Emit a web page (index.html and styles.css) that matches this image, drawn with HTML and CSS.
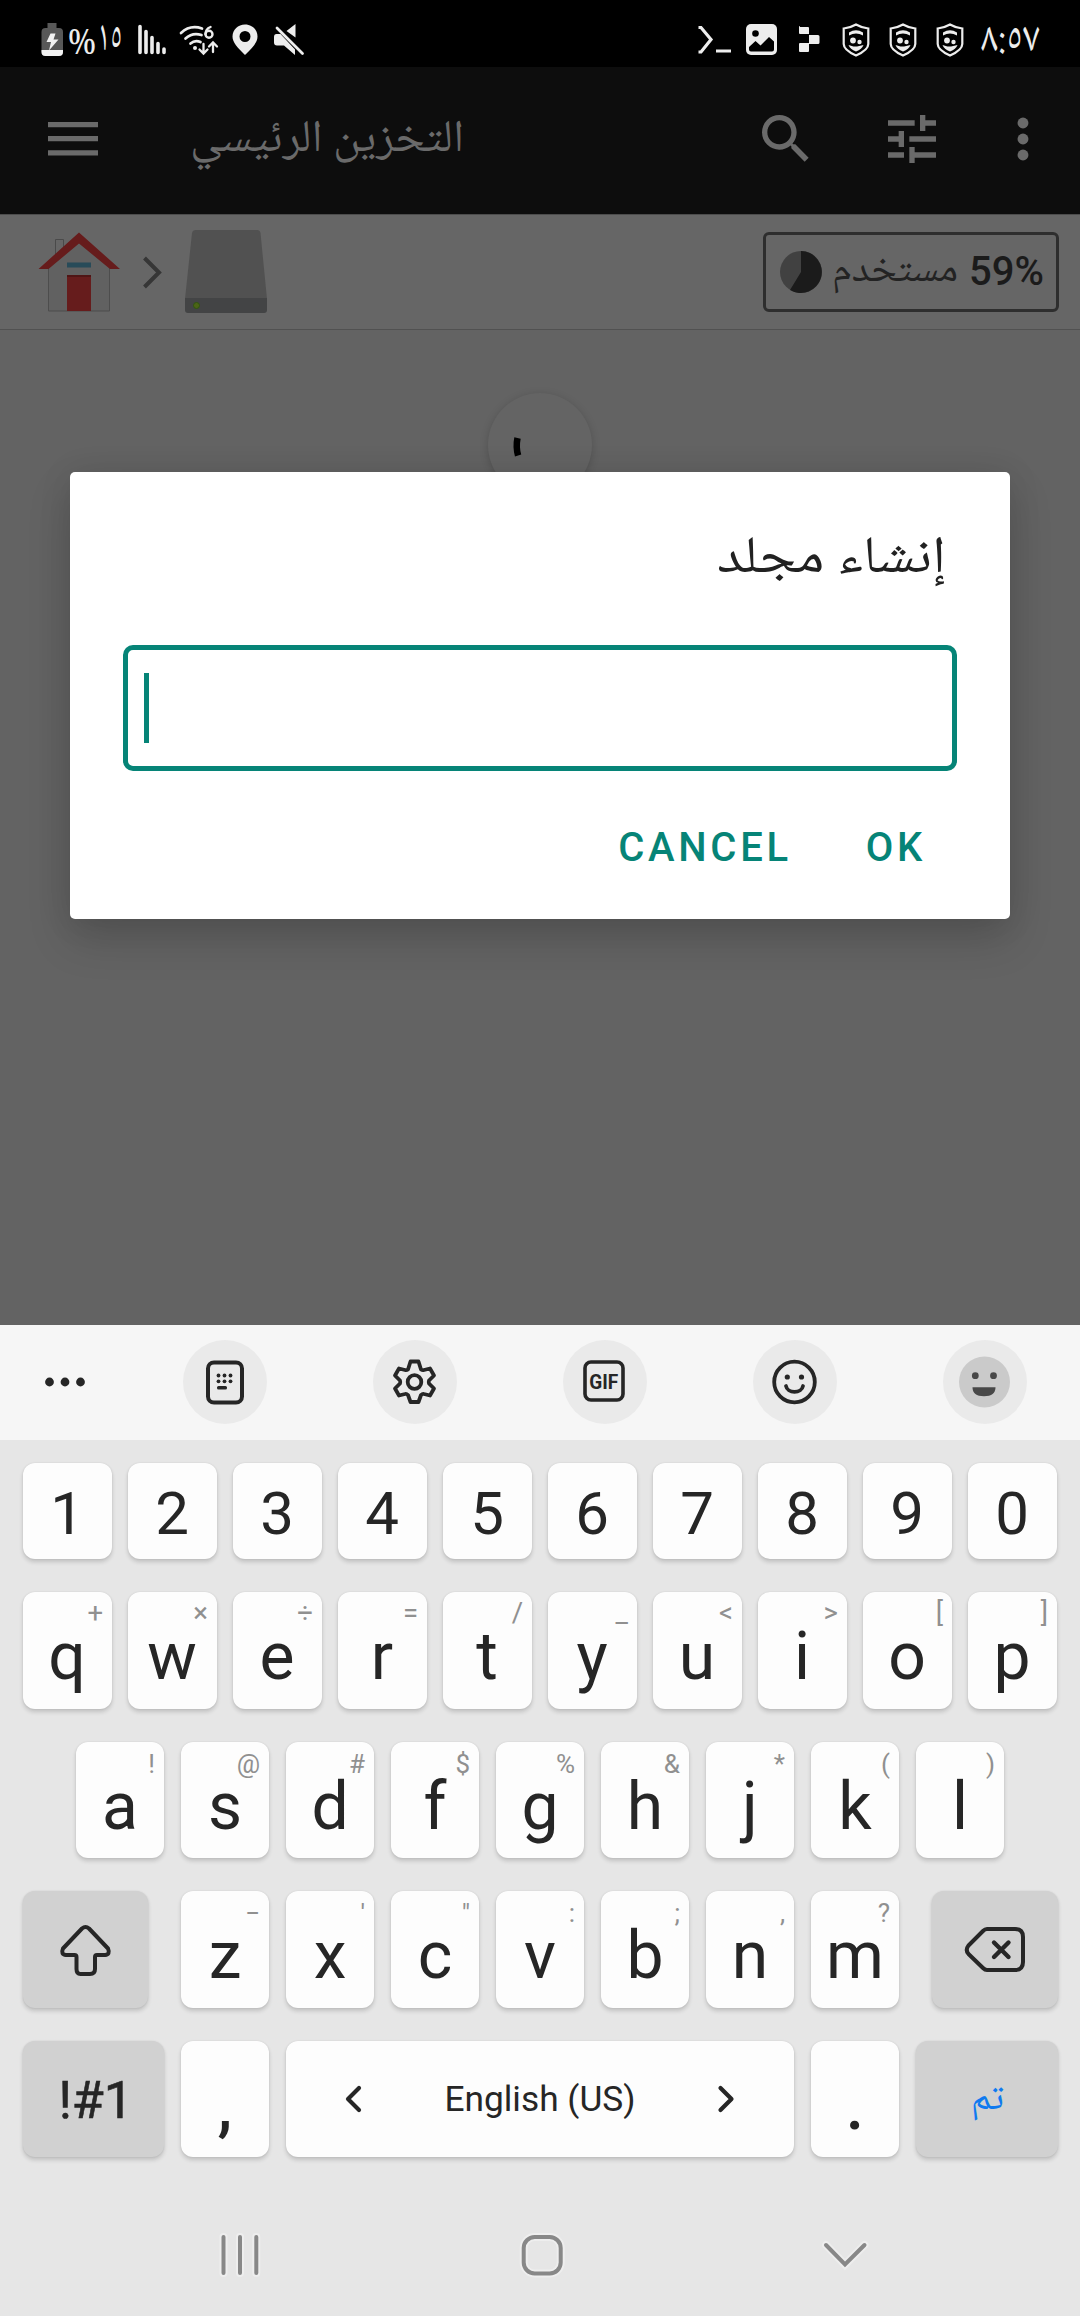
FILE: index.html
```html
<!DOCTYPE html>
<html lang="ar">
<head>
<meta charset="utf-8">
<title>إنشاء مجلد</title>
<link rel="stylesheet" href="styles.css">
</head>
<body>
<div class="screen">
  <header class="status">
    <svg class="s-battery" width="22" height="34" viewBox="40.500 23 22 34"><path fill="#585858" d="M47 23h9v5h2.500q4 0 4 4V52q0 4-4 4h-13.500q-4 0-4-4V32q0-4 4-4H47z"/><path fill="#f2f2f2" d="M41 50h21.500v2q0 4-4 4h-13.500q-4 0-4-4zM50 33.500h5l-2 6h5l-9.500 11 2-8.500H46z"/></svg>
    <svg class="s-pct" width="56" height="40" viewBox="67 21 56 40"><text class="ar light" x="68" y="55" font-size="34" textLength="28" lengthAdjust="spacingAndGlyphs">%</text><text class="ar light" x="97.500" y="51" font-size="44" textLength="25" lengthAdjust="spacingAndGlyphs">١٥</text></svg>
    <svg class="s-signal" width="30" height="32" viewBox="137 24 30 32"><path stroke="#ededed" stroke-width="3.600" stroke-linecap="round" d="M140 26.500v26M146 31.500v21M152 37.500v15M158 43.500v9M164 49v3.500"/></svg>
    <svg class="s-wifi" width="40" height="34" viewBox="179 23 40 34"><g fill="none" stroke="#ededed" stroke-width="2.700" stroke-linecap="round"><path d="M181 33q9-8.500 21-4.500M185.500 38.500q7-6.500 16-3.500M190.500 43.500q4.500-4 10-1.500"/><path d="M203.500 44v9M199.500 49.500l4 4 4-4M213 52v-9M209 46.500l4-4 4 4" stroke-width="2.300"/><path d="M210.500 27q-5 2-5 7" stroke-width="2.400"/><circle cx="209" cy="34.300" r="3.500" stroke-width="2.400"/></g><circle cx="195" cy="48" r="2" fill="#ededed"/></svg>
    <svg class="s-pin" width="26" height="32" viewBox="231.500 23.500 26 32"><path fill="#ededed" fill-rule="evenodd" d="M244.500 24c7 0 12.500 5 12.500 12 0 6-5 11-12.500 18.500C237 47 232 42 232 36c0-7 5.500-12 12.500-12zm0 6.500a5.500 5.500 0 1 0 0 11 5.500 5.500 0 0 0 0-11z"/></svg>
    <svg class="s-mute" width="32" height="32" viewBox="273 24 32 32"><path fill="#ededed" d="M276.500 34h4l14.500 15.500V55L284 45.500h-7q-3 0-3-3V37q0-3 2.500-3zM286.500 31l9-7v13.500z"/><path stroke="#ededed" stroke-width="2.800" stroke-linecap="round" d="M277 28l25.500 25.500"/></svg>
    <span class="grow"></span>
    <svg class="s-term" width="34" height="32" viewBox="699 24 34 32"><path fill="none" stroke="#ededed" stroke-width="3.200" d="M699.500 27.500h2.500l10 12-10 12.500h-2.500M717 51h15"/></svg>
    <svg class="s-image" width="31" height="31" viewBox="747 24 31 31"><rect x="747" y="24" width="31" height="31" rx="5" fill="#ededed"/><circle cx="756.500" cy="33.500" r="3.300"/><path d="M750 47l6.500-6 5 4.500 8.500-8.500 5 4.500v8q0 2-2 2h-21q-2 0-2-2z"/></svg>
    <svg class="s-squares" width="21" height="26" viewBox="800 27 21 26"><path fill="#ededed" d="M801 27h8q1 0 1 1v7h9q1.500 0 1.500 1.500v6q0 1.500-1.500 1.500h-9v7q0 1-1 1h-8q-1 0-1-1v-7q0-1 1-1h9v-9h-9q-1 0-1-1v-6q0-1 1-1z"/></svg>
    <svg class="s-shield" width="28" height="34" viewBox="0 0 28 34"><use href="#shield"/></svg>
    <svg class="s-shield2" width="28" height="34" viewBox="0 0 28 34"><use href="#shield"/></svg>
    <svg class="s-shield2" width="28" height="34" viewBox="0 0 28 34"><g id="shield"><path fill="none" stroke="#ededed" stroke-width="2.200" d="M14 1.500q5 3 12.300 4V21q0 6-12.300 11.500Q1.700 27 1.700 21V5.500Q9 4.500 14 1.500z"/><g fill="#ededed"><path d="M7 9.500q7-4.500 14 0v3q-7-4-14 0zM6.500 22l5 1.500 3.500 0 6.500-1.500q-1.500 4-7.500 6.500-6-2.500-7.500-6.500z"/><circle cx="11" cy="17.500" r="2.900"/><circle cx="17.500" cy="19" r="2.200"/></g></g></svg>
    <svg class="s-time" width="60" height="36" viewBox="981 22 60 36"><text class="ar light" x="981" y="51" font-size="43" textLength="59" lengthAdjust="spacingAndGlyphs">٨:٥٧</text></svg>
  </header>

  <div class="appbar">
    <svg class="menu" width="50" height="36" viewBox="48 122 50 36"><path fill="#6a6a6a" d="M48 123h50v5.300H48zM48 137h50v5.300H48zM48 151.300h50v5.300H48z"/></svg>
    <svg class="title" width="274" height="70" viewBox="190 105 274 70"><text class="ar" fill="#6a6a6a" x="190" y="152" font-size="45" textLength="274" lengthAdjust="spacingAndGlyphs">التخزين الرئيسي</text></svg>
    <span class="grow"></span>
    <svg width="64" height="64" viewBox="0 0 24 24"><path fill="#6a6a6a" d="M15.500 14h-.79l-.28-.27A6.471 6.471 0 0 0 16 9.500 6.500 6.500 0 1 0 9.500 16c1.610 0 3.090-.59 4.230-1.570l.27.28v.79l5 4.990L20.490 19l-4.990-5zm-6 0C7.010 14 5 11.990 5 9.500S7.010 5 9.500 5 14 7.010 14 9.500 11.990 14 9.500 14z"/></svg>
    <svg class="tune" width="64" height="64" viewBox="0 0 24 24"><path fill="#6a6a6a" d="M3 17v2h6v-2H3zM3 5v2h10V5H3zm10 16v-2h8v-2h-8v-2h-2v6h2zM7 9v2H3v2h4v2h2V9H7zm14 4v-2H11v2h10zm-6-4h2V7h4V5h-4V3h-2v6z"/></svg>
    <svg class="more" width="64" height="64" viewBox="0 0 24 24"><g fill="#6a6a6a"><circle cx="12" cy="6" r="2.050"/><circle cx="12" cy="12" r="2.050"/><circle cx="12" cy="18" r="2.050"/></g></svg>
  </div>

  <nav class="crumbs">
    <svg class="home" width="82" height="84" viewBox="38 230 82 84"><path fill="#666" stroke="#4a4a4a" d="M55.500 260v-20.500h8V252"/><path fill="#616161" d="M48.500 268L79 240l30.500 28v43h-61z"/><path fill="none" stroke="#4d4d4d" d="M48.500 268v43h61v-43"/><path fill="#661c1c" d="M79 232.500l41 36.500h-10L79 243.500 48.500 269H38.500zM67 275h24v36H67z"/><path fill="#4f1515" d="M67 275h24v2H67z"/><path fill="#284b59" d="M67 262.500h24v5H67z"/></svg>
    <svg class="sep" width="20" height="34" viewBox="142 256 20 34"><path fill="none" stroke="#363636" stroke-width="4" d="M144.500 259l14.500 14.500-14.500 14.500"/></svg>
    <svg class="drive" width="84" height="84" viewBox="184 230 84 84"><path fill="#515151" d="M196 230h61q3 0 3.500 3l6.500 66h-82l7-66q.5-3 4-3z"/><path fill="#434445" d="M185 298h82v12q0 3-3 3h-76q-3 0-3-3z"/><circle cx="196.500" cy="305.500" r="3" fill="#4c6416" stroke="#30560f"/></svg>
    <span class="grow"></span>
    <div class="usage">
      <svg class="pie" width="42" height="42" viewBox="0 0 42 42"><circle cx="21" cy="21" r="21" fill="#414141"/><path fill="#1b1b1b" d="M21 21V0a21 21 0 1 1-11 39z"/></svg>
      <svg class="used" width="124" height="64" viewBox="834 240 124 64"><text class="ar" fill="#232323" x="832" y="281" font-size="40" textLength="126" lengthAdjust="spacingAndGlyphs">مستخدم</text></svg>
      <span class="percent">59%</span>
    </div>
  </nav>

  <main class="content">
    <div class="spinner"><svg width="104" height="104" viewBox="488 393 104 104"><path fill="none" stroke="#000" stroke-width="6.500" d="M517.500 438q-1.800 9 .6 17.500"/></svg></div>
  </main>

  <section class="dialog">
    <svg class="dlg-title" width="234" height="80" viewBox="712 520 234 80"><text class="ar" fill="#212121" x="717" y="572" font-size="52" textLength="229" lengthAdjust="spacingAndGlyphs">إنشاء مجلد</text></svg>
    <div class="field"><span class="caret"></span></div>
    <div class="actions"><span>CANCEL</span><span>OK</span></div>
  </section>

  <section class="keyboard">
    <div class="tools">
      <svg class="dots" width="40" height="12" viewBox="45 1377 40 12"><g fill="#262626"><circle cx="49.500" cy="1383" r="4.400"/><circle cx="65" cy="1383" r="4.400"/><circle cx="80.500" cy="1383" r="4.400"/></g></svg>
      <div class="tool"><svg width="84" height="84" viewBox="183 1340 84 84"><rect x="208" y="1362.500" width="34" height="40" rx="6" fill="none" stroke="#262626" stroke-width="4"/><g fill="#262626"><circle cx="218.500" cy="1375.500" r="1.900"/><circle cx="224.500" cy="1375.500" r="1.900"/><circle cx="230.500" cy="1375.500" r="1.900"/><circle cx="218.500" cy="1381.300" r="1.900"/><circle cx="224.500" cy="1381.300" r="1.900"/><circle cx="230.500" cy="1381.300" r="1.900"/><rect x="217" y="1386" width="10" height="3.400" rx="1.500"/></g></svg></div>
      <div class="tool"><svg width="84" height="84" viewBox="-41.500 -42 84 84"><g fill="none" stroke="#262626" stroke-width="3.800" stroke-linejoin="round"><path d="M-4-20.500H4L6.500-12.500Q8-11.500 9.500-12L15.500-13.500L19.500-6.500L14.500-1.500Q14 0 14.500 1.500L19.500 6.500L15.500 13.500L9.500 12Q8 11.500 6.500 13L4 20H-4L-6.500 13Q-8 11.500-9.500 12L-15.500 13.500L-19.500 6.500L-14.500 1.500Q-14 0-14.500-1.500L-19.500-6.500L-15.500-13.500L-9.500-12Q-8-11.500-6.500-12.500Z"/><circle r="6.800"/></g></svg></div>
      <div class="tool"><svg width="84" height="84" viewBox="563 1340 84 84"><rect x="585" y="1362" width="38" height="38" rx="6" fill="none" stroke="#262626" stroke-width="3.600"/><text class="gif" x="589.300" y="1389" textLength="29" lengthAdjust="spacingAndGlyphs">GIF</text></svg></div>
      <div class="tool"><svg width="84" height="84" viewBox="-41.500 -42 84 84"><g fill="none" stroke="#262626" stroke-width="3.800" stroke-linecap="round"><circle r="20.300"/><path d="M-8.500 4a8.600 7 0 0 0 17 0"/></g><g fill="#262626"><circle cx="-7.200" cy="-5" r="2.600"/><circle cx="7" cy="-5" r="2.600"/></g></svg></div>
      <div class="tool"><svg width="84" height="84" viewBox="-41.500 -42 84 84"><circle r="25.500" fill="#cacaca"/><g fill="#484848"><circle cx="-9.200" cy="-6.300" r="3.400"/><circle cx="9" cy="-6.300" r="3.400"/><path d="M-12 5.300h23q0 9-11.500 9T-12 5.300z"/></g></svg></div>
    </div>

    <div class="keys">
      <div class="row digits"><b>1</b><b>2</b><b>3</b><b>4</b><b>5</b><b>6</b><b>7</b><b>8</b><b>9</b><b>0</b></div>
      <div class="row r2"><b>q<i>+</i></b><b>w<i>×</i></b><b>e<i>÷</i></b><b>r<i>=</i></b><b>t<i>/</i></b><b>y<i>_</i></b><b>u<i>&lt;</i></b><b>i<i>&gt;</i></b><b>o<i>[</i></b><b>p<i>]</i></b></div>
      <div class="row r3"><b>a<i>!</i></b><b>s<i>@</i></b><b>d<i>#</i></b><b>f<i>$</i></b><b>g<i>%</i></b><b>h<i>&amp;</i></b><b>j<i>*</i></b><b>k<i>(</i></b><b>l<i>)</i></b></div>
      <div class="row r4">
        <b class="fn shift"><svg width="54" height="54" viewBox="58 1922 54 54"><path fill="none" stroke="#262626" stroke-width="4" stroke-linejoin="round" d="M82 1927.500q3.500-3 7 0L108 1947.500q2.500 6-3 6.500H97q-2 0-2 2v12q0 5-5 5h-9.500q-4 0-4-5v-12q0-2-2-2H66q-5.500-.5-3-6.500z"/></svg></b>
        <b>z<i>−</i></b><b>x<i>'</i></b><b>c<i>"</i></b><b>v<i>:</i></b><b>b<i>;</i></b><b>n<i>,</i></b><b>m<i>?</i></b>
        <b class="fn del"><svg width="62" height="48" viewBox="963 1926 62 48"><path fill="none" stroke="#262626" stroke-width="4" stroke-linejoin="round" d="M986 1929h28q8 0 8 8v25q0 8-8 8h-28q-2 0-4-2l-14.500-14q-3.500-4 0-8.500L982 1931q2-2 4-2z"/><path stroke="#262626" stroke-width="4.400" stroke-linecap="round" d="M993 1942.500l14.500 14.500M1007.500 1942.500L993 1957"/></svg></b>
      </div>
      <div class="row r5">
        <b class="fn sym">!#1</b><b class="punct">,</b>
        <b class="space"><svg width="18" height="28" viewBox="346 2085 18 28"><path fill="none" stroke="#262626" stroke-width="4.200" stroke-linecap="round" stroke-linejoin="round" d="M360 2088l-11 11 11 11"/></svg><span>English (US)</span><svg width="18" height="28" viewBox="717 2085 18 28"><path fill="none" stroke="#262626" stroke-width="4.200" stroke-linecap="round" stroke-linejoin="round" d="M720.500 2088l11 11-11 11"/></svg></b>
        <b class="punct">.</b><b class="fn done"><svg width="60" height="60" viewBox="957 2070 60 60"><text class="ar" fill="#0f7af0" x="971" y="2110" font-size="38" textLength="33" lengthAdjust="spacingAndGlyphs">تم</text></svg></b>
      </div>
    </div>

    <div class="navbar">
      <svg class="recents" width="42" height="48" viewBox="219 2232 42 48"><path class="halo" d="M223.500 2238v36M240 2238v36M256.300 2238v36"/><path d="M223.500 2238v36M240 2238v36M256.300 2238v36"/></svg>
      <svg class="homebtn" width="48" height="48" viewBox="518 2232 48 48"><rect class="halo" x="523.700" y="2238" width="37" height="36.500" rx="11"/><rect x="523.700" y="2238" width="37" height="36.500" rx="11"/></svg>
      <svg class="hide" width="50" height="32" viewBox="820 2240 50 32"><path class="halo" d="M826 2246l19 19.500 19.500-19.500"/><path d="M826 2246l19 19.500 19.500-19.500"/></svg>
    </div>
  </section>
</div>
</body>
</html>
```
FILE: styles.css
```css
* { box-sizing: border-box; }
body { margin: 0; font-family: Roboto, "Noto Sans", sans-serif; background: #636363; }
svg { display: block; flex: none; overflow: visible; }
.screen { position: relative; width: 1080px; height: 2316px; display: flex; flex-direction: column; overflow: hidden; }
.grow { flex: 1; }
.ar { font-family: "Noto Naskh Arabic", "Noto Sans Arabic", "DejaVu Sans", sans-serif; }
.light { fill: #ededed; }

.status { height: 67px; background: #000; display: flex; align-items: center; padding: 12px 39px 0 40.500px; }
.s-pct { margin-left: 4.500px; }
.s-signal { margin-left: 14px; }
.s-wifi { margin-left: 12px; }
.s-pin { margin-left: 12.500px; }
.s-mute { margin-left: 15.500px; }
.s-image { margin-left: 14px; }
.s-squares { margin-left: 22px; }
.s-shield { margin-left: 22px; }
.s-shield2 { margin-left: 19px; }
.s-time { margin-left: 17px; }

.appbar { height: 147px; background: #0d0d0d; display: flex; align-items: center; padding: 0 25.500px 3px 48px; }
.title { margin-left: 92px; }
.tune { margin-left: 62px; }
.more { margin-left: 47px; }

.crumbs { height: 116px; background: #666; border-top: 1px solid #4c4c4c; border-bottom: 1px solid #515151; display: flex; align-items: center; padding: 0 21px 0 38px; }
.home { margin-top: -1px; }
.sep { margin-left: 22px; }
.drive { margin-left: 22px; }
.usage { width: 296px; height: 80px; border: 3px solid #2e2e2e; border-radius: 6px; display: flex; align-items: center; padding-left: 14px; }
.used { margin-left: 12px; }
.percent { margin-left: 11px; font-size: 40px; font-weight: 500; color: #1b1b1b; line-height: 76px; }

.content { flex: 1; background: #636363; padding-top: 63px; }
.spinner { width: 104px; height: 104px; margin: 0 auto; border-radius: 50%; background: #646464; box-shadow: 0 2px 9px rgba(0,0,0,.18); }

.dialog { position: absolute; left: 70px; top: 472px; width: 940px; height: 447px; background: #fff; border-radius: 5px; padding: 48px 53px 0; box-shadow: 0 20px 44px rgba(0,0,0,.16), 0 2px 34px rgba(0,0,0,.09); }
.dlg-title { margin: 0 11px 0 auto; }
.field { height: 126px; margin-top: 45px; border: 5px solid #068477; border-radius: 10px; padding: 23px 16px; }
.caret { display: block; width: 5px; height: 70px; background: #068477; }
.actions { display: flex; justify-content: flex-end; gap: 74px; padding-right: 31px; margin-top: 47px; color: #068477; font-size: 40px; font-weight: 500; line-height: 60px; letter-spacing: 3.700px; }

.keyboard { height: 991px; background: #e6e6e6; color: #262626; }
.tools { height: 115px; background: #f6f6f6; display: flex; align-items: center; padding: 0 53px 1px 45px; justify-content: space-between; }
.dots { margin-right: -8px; }
.tool { width: 84px; height: 84px; border-radius: 50%; background: #eaeaea; }
.gif { font-family: Roboto, sans-serif; font-size: 20.500px; font-weight: 700; fill: #262626; }

.keys { padding: 23px 22px 0 23px; }
.row { display: flex; gap: 16px; }
.row b { position: relative; width: 89px; flex: none; border-radius: 12px; background: #fdfdfd; box-shadow: 0 3px 4px rgba(0,0,0,.16), 0 0 2px rgba(0,0,0,.1); font-weight: 400; font-size: 66px; text-align: center; line-height: 129px; }
.row i { position: absolute; top: 0; right: 9px; font-style: normal; font-size: 26px; line-height: 44px; color: #909090; }
.row .fn { background: #d1d1d1; }
.digits b { height: 96px; font-size: 60px; line-height: 101px; padding-right: 1px; }
.r2 { margin-top: 33px; }
.r2 b { height: 117px; padding-right: 1px; }
.r2 i { font-size: 27.500px; line-height: 42px; }
.r3 { margin: 33px 0 0 53px; gap: 17px; }
.r3 b { width: 88px; height: 116px; }
.r4 { margin: 33px -1px 0 -.500px; gap: 17px; }
.r4 b { width: 88px; height: 117px; }
.r4 .fn { width: 125.500px; display: flex; align-items: center; justify-content: center; }
.r4 .shift { margin-right: 16px; }
.r4 .del { margin-left: 16px; }
.r5 { margin: 33px -1px 0 -.500px; gap: 17px; }
.r5 b { height: 116px; width: 88px; }
.r5 .sym { width: 141.500px; padding-left: 5px; font-size: 52px; line-height: 119px; -webkit-text-stroke: .600px #262626; }
.r5 .punct { line-height: 132px; font-weight: 500; }
.r5 .space { width: 508px; display: flex; align-items: center; justify-content: space-between; padding: 0 59px; font-size: 35.300px; line-height: 119px; }
.r5 .done { width: 141.500px; display: flex; align-items: center; justify-content: center; }

.navbar { display: flex; align-items: center; height: 48px; margin-top: 74px; padding-left: 219px; fill: none; stroke: #888; stroke-width: 4px; stroke-linecap: round; }
.halo { stroke: #eee; stroke-width: 8px; }
.homebtn { margin-left: 257px; }
.hide { margin-left: 254px; }
```
